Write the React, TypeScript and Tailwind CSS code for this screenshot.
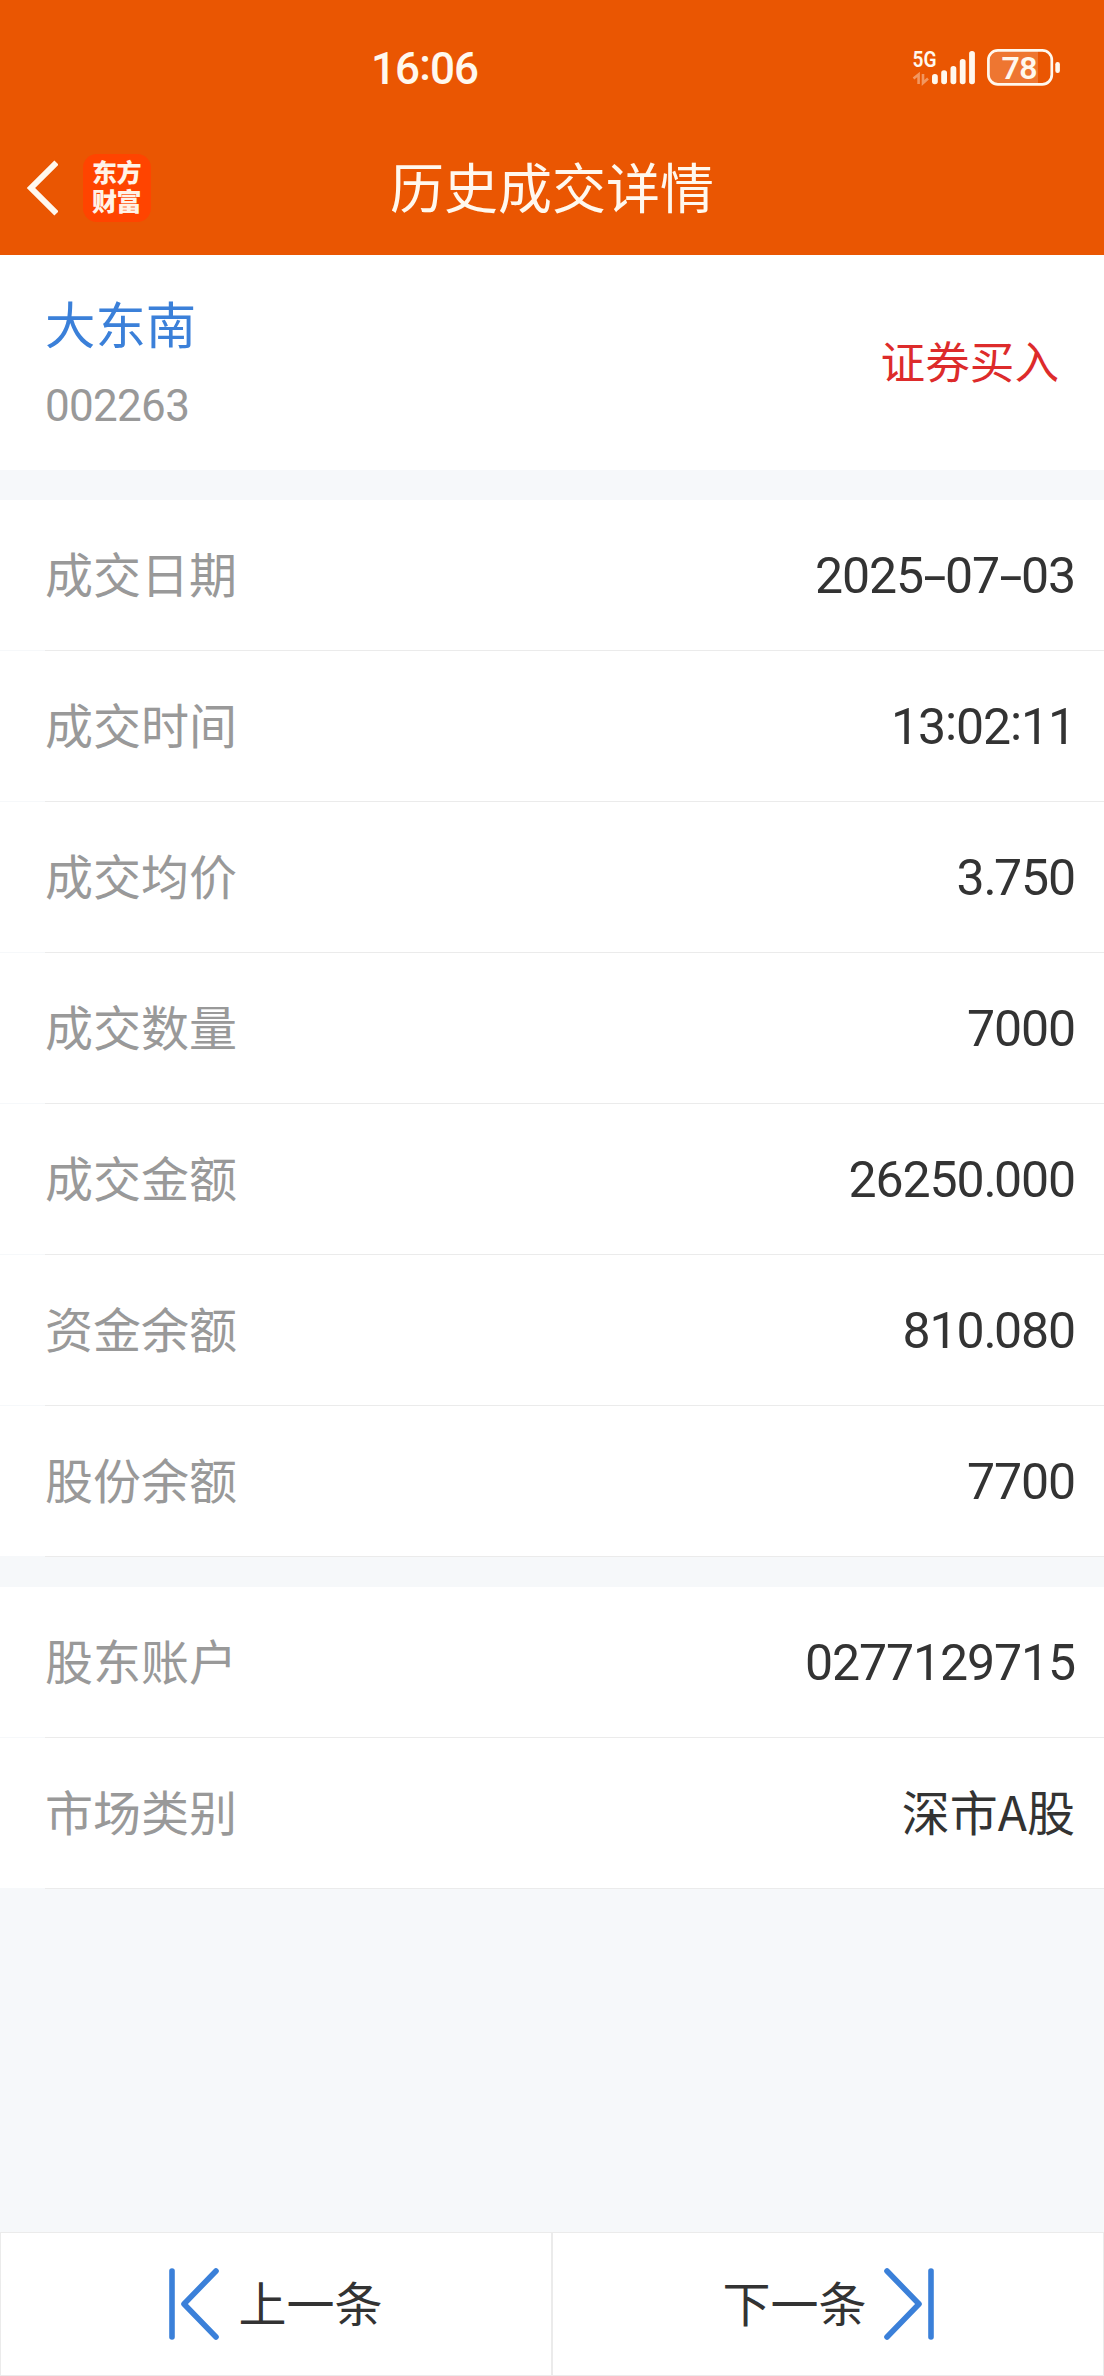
import { Fragment } from "react";

const CJK = "font-['Noto_Sans_CJK_SC',sans-serif]";
const DIGITS = "font-[Roboto,'Noto_Sans_CJK_SC',sans-serif]";

const tradeRows = [
  { label: "成交日期", value: "2025-07-03" },
  { label: "成交时间", value: "13:02:11" },
  { label: "成交均价", value: "3.750" },
  { label: "成交数量", value: "7000" },
  { label: "成交金额", value: "26250.000" },
  { label: "资金余额", value: "810.080" },
  { label: "股份余额", value: "7700" },
];

const accountRows = [
  { label: "股东账户", value: "0277129715" },
  { label: "市场类别", value: "深市A股" },
];

/** Sets digits with centred colons, wide hyphens and tight decimal points. */
function Figures({ text }: { text: string }) {
  return (
    <>
      {text.split(/([:.-])/).map((part, i) => (
        <Fragment key={i}>
          {part === ":" ? (
            <span className="align-[4px] leading-none">:</span>
          ) : part === "-" ? (
            <span className="inline-block w-[22px] origin-center scale-x-[1.65] text-center leading-none">-</span>
          ) : part === "." ? (
            <span className="tracking-[-2.6px]">.</span>
          ) : (
            part
          )}
        </Fragment>
      ))}
    </>
  );
}

function Row({ label, value }: { label: string; value: string }) {
  const cjk = /[\u4e00-\u9fff]/.test(value);
  return (
    <div className="flex h-[151px] flex-col">
      <div className="flex h-[150px] items-center justify-between bg-white pl-[45px] pr-[29px]">
        <span className="pb-[6px] text-[48px] leading-[70px] text-[#999999]">{label}</span>
        {cjk ? (
          <span className="pb-[6px] text-[48px] leading-[70px] text-[#333333]">{value}</span>
        ) : (
          <span className={`${DIGITS} pt-[2px] text-[50px] leading-[70px] tracking-[-1.1px] text-[#333333]`}>
            <Figures text={value} />
          </span>
        )}
      </div>
      <div className="ml-[45px] h-px bg-[#ebebeb]" />
    </div>
  );
}

function StatusBar() {
  return (
    <div className="flex h-[120px] items-start justify-between pl-[371px] pr-[42px] pt-[43px] text-[#fff8ee]">
      <span className={`${DIGITS} text-[44px] font-medium leading-[52px] tracking-[-0.9px]`}>
        <Figures text="16:06" />
      </span>
      <svg width="150" height="44" viewBox="912 46 150 44" className="mt-[3px] block" fill="currentColor">
        <text x="912.5" y="67" fontSize="22" fontWeight="600" fontFamily="Roboto" textLength="24" lengthAdjust="spacingAndGlyphs">
          5G
        </text>
        <g stroke="currentColor" strokeWidth="2.6" fill="none" opacity="0.4">
          <path d="M913.5 78.5L918.6 74.5V84" />
          <path d="M923 74V83L928 78.5" />
        </g>
        <rect x="932" y="74" width="5.8" height="10.3" rx="2.8" />
        <rect x="941.2" y="70.3" width="5.8" height="14" rx="2.8" />
        <rect x="950.5" y="66" width="5.8" height="18.3" rx="2.8" />
        <rect x="959.8" y="59" width="5.8" height="25.3" rx="2.8" />
        <rect x="969.1" y="51" width="5.8" height="33.3" rx="2.8" />
        <path d="M997 51H1038V84H997A8 8 0 0 1 989 76V59A8 8 0 0 1 997 51Z" opacity="0.2" />
        <rect x="988.4" y="50.3" width="63.4" height="34" rx="9.5" fill="none" stroke="currentColor" strokeWidth="2.7" />
        <rect x="1055.3" y="62" width="4.6" height="11" rx="2.2" />
        <text x="1001.5" y="79" fontSize="32" fontWeight="600" fontFamily="Roboto" textLength="36">
          78
        </text>
      </svg>
    </div>
  );
}

function Logo() {
  return (
    <div className="ml-[25px] h-[68px] w-[68px] rounded-[14px] bg-[#ff4400] pl-[9px] pt-[3px] text-[25px] font-black leading-[29px] tracking-[-0.4px] text-[#fff3e8]">
      东方
      <br />
      财富
    </div>
  );
}

function SkipIcon({ flip = false }: { flip?: boolean }) {
  return (
    <svg
      width="50"
      height="72"
      viewBox="0 0 50 72"
      className={flip ? "block -scale-x-100" : "block"}
      fill="none"
      stroke="#3b80d9"
      strokeWidth="5.6"
      strokeLinecap="round"
      strokeLinejoin="round"
    >
      <path d="M3 3V69" />
      <path d="M47 3L15 36L47 69" />
    </svg>
  );
}

export default function App() {
  return (
    <div className={`${CJK} flex h-[2376px] w-[1104px] flex-col bg-[#f6f8fa]`}>
      <header className="h-[255px] bg-[#ea5602]">
        <StatusBar />
        <div className="grid h-[135px] grid-cols-[1fr_auto_1fr] items-center">
          <div className="flex items-center pl-[26px]">
            <svg width="32" height="56" viewBox="0 0 32 56" fill="none" stroke="#fff8ee" strokeWidth="6">
              <path d="M30.5 2.5L5 28L30.5 53.5" />
            </svg>
            <Logo />
          </div>
          <h1 className="pb-[4px] text-[54px] leading-[80px] text-[#fff8ee]">历史成交详情</h1>
          <div />
        </div>
      </header>

      <section className="flex h-[215px] items-center justify-between bg-white pl-[45px] pr-[45px]">
        <div className="pt-[3px]">
          <div className="text-[50.4px] leading-[76px] text-[#3b80d9]">大东南</div>
          <div className={`${DIGITS} mt-[7px] text-[44px] leading-[76px] tracking-[-0.7px] text-[#999999]`}>002263</div>
        </div>
        <div className="pb-[5px] text-[44.6px] leading-[66px] text-[#dd2b2b]">证券买入</div>
      </section>

      <section className="mt-[30px]">
        {tradeRows.map((row) => (
          <Row key={row.label} {...row} />
        ))}
      </section>

      <section className="mt-[30px]">
        {accountRows.map((row) => (
          <Row key={row.label} {...row} />
        ))}
      </section>

      <nav className="mt-auto grid h-[144px] grid-cols-2 text-[48px] leading-[70px] text-[#333333]">
        <button className="flex items-center justify-center gap-[19px] border border-[#ebebeb] bg-white">
          <SkipIcon />
          <span className="pb-[6px]">上一条</span>
        </button>
        <button className="flex items-center justify-center gap-[17px] border border-[#ebebeb] bg-white">
          <span className="pb-[6px]">下一条</span>
          <SkipIcon flip />
        </button>
      </nav>
    </div>
  );
}
